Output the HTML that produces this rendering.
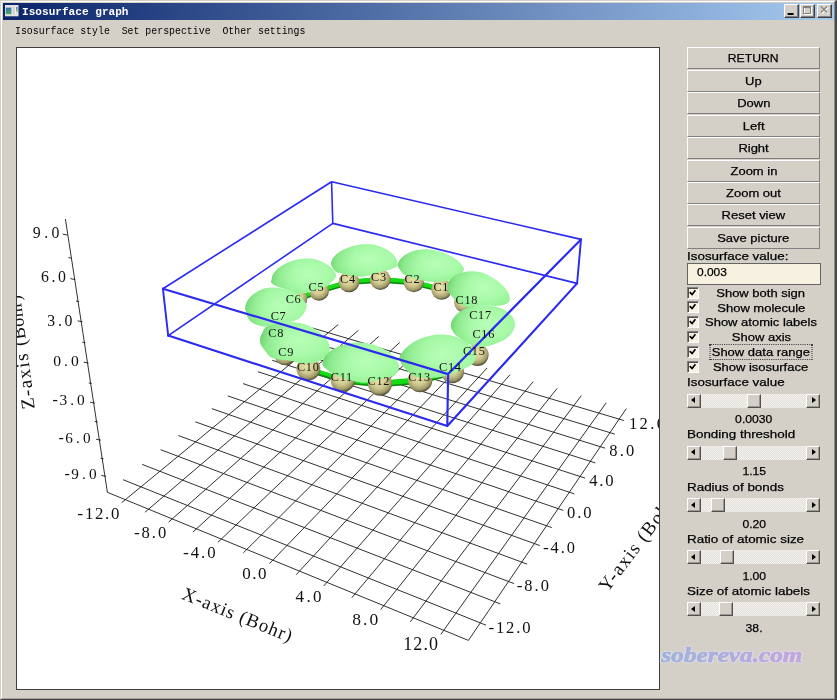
<!DOCTYPE html>
<html><head><meta charset="utf-8"><title>Isosurface graph</title>
<style>
html,body{margin:0;padding:0}
body{width:837px;height:700px;background:#d4d0c8;position:relative;overflow:hidden;font-family:"Liberation Sans",sans-serif;font-size:11.6px;color:#000}
#win{position:absolute;left:0;top:0;width:837px;height:700px;box-sizing:border-box;border-left:1px solid #d4d0c8;border-top:1px solid #d4d0c8;border-right:2px solid #484848;border-bottom:1px solid #404040}
#win2{position:absolute;left:1px;top:1px;width:834px;height:698px;border-left:1px solid #fff;border-top:1px solid #fff;border-right:1px solid #8c8a86;border-bottom:1px solid #a8a5a0;box-sizing:border-box}
#tb{position:absolute;left:3px;top:3px;width:831px;height:17px;background:linear-gradient(90deg,#0a246a 0%,#a6caf0 100%)}
#ttl{position:absolute;left:22px;top:5px;font:bold 11.1px/14px "Liberation Mono",monospace;color:#fff;white-space:pre}
#menu{position:absolute;left:15px;top:25px;font:9.9px/14px "Liberation Mono",monospace;color:#000;white-space:pre;transform:scaleY(1.14);transform-origin:0 78%}
.wb{position:absolute;top:4.3px;width:14.6px;height:13.9px;background:#d4d0c8;box-sizing:border-box;border:1px solid;border-color:#fff #404040 #404040 #fff;box-shadow:inset -1px -1px 0 #808080}
svg text{font-family:"Liberation Serif",serif;fill:#111}
.t{display:inline-block;transform:scaleX(1.12);transform-origin:50% 50%;white-space:nowrap;-webkit-text-stroke:0.25px #000}
.btn{position:absolute;left:687px;width:133px;height:22px;box-sizing:border-box;border:1px solid;border-color:#fff #808080 #808080 #fff;text-align:center;line-height:20px;background:#d4d0c8}
.lab{position:absolute;left:687px;height:14px;line-height:14px;white-space:nowrap;transform:scaleX(1.157);transform-origin:0 50%;-webkit-text-stroke:0.25px #000}
.inp{position:absolute;left:687px;top:263px;width:134px;height:22px;box-sizing:border-box;border:1px solid #646464;background:#f6f1e1;line-height:16.4px;padding-left:9.4px}
.cb{position:absolute;left:686.5px;width:12px;height:12px;box-sizing:border-box;background:#f6f1e1;border:1px solid;border-color:#808080 #fff #fff #808080;box-shadow:inset 1px 1px 0 #505050}
.cb svg{position:absolute;left:-1px;top:-1px}
.cbl{position:absolute;left:701px;width:120px;height:14px;line-height:14px;text-align:center}
.foc .t{outline:1px dotted #444;outline-offset:0px;padding:0 1px}
.sb{position:absolute;left:686.7px;width:133.8px;height:14.3px;background:#ebe9e5;background-image:conic-gradient(#f3f2ef 25%,#e3e0da 0 50%,#f3f2ef 0 75%,#e3e0da 0);background-size:2px 2px}
.ar,.th{position:absolute;top:0;width:14.3px;height:14.3px;box-sizing:border-box;background:#d4d0c8;border:1px solid;border-color:#fff #505050 #505050 #fff;box-shadow:inset -1px -1px 0 #9a9890}
.ar i{position:absolute;top:2.8px;width:0;height:0;border:3.4px solid transparent}
.ar i.l{left:0px;border-right:4px solid #000;border-left:0;left:3px}
.ar i.r{left:5px;border-left:4px solid #000;border-right:0}
.val .t{transform:scaleX(1.05)}
.val{position:absolute;left:687px;width:134px;height:14px;line-height:14px;text-align:center}
</style></head><body>
<div id="root" style="position:absolute;left:0;top:0;width:837px;height:700px;will-change:transform">
<div id="win"></div><div id="win2"></div>
<div id="tb"></div>
<svg style="position:absolute;left:5px;top:5px" width="14" height="12" viewBox="0 0 14 12"><defs><linearGradient id="ig" x1="0" y1="0" x2="0" y2="1"><stop offset="0" stop-color="#3a74b4"/><stop offset="1" stop-color="#42ac62"/></linearGradient></defs><rect x="0" y="0" width="13.5" height="11.3" fill="#e6e4de"/><rect x="0.8" y="2.6" width="5.6" height="6.6" fill="url(#ig)"/><rect x="8" y="2" width="2" height="7.5" fill="#cfcfcf"/><rect x="10" y="2" width="1.2" height="7.5" fill="#f4f4f4"/><rect x="11.3" y="2" width="1.2" height="2" fill="#3a6ab0"/><rect x="11.3" y="4" width="1.2" height="2.6" fill="#4aa860"/></svg>
<div id="ttl">Isosurface graph</div>
<div class="wb" style="left:784.3px"><svg width="12" height="11" style="position:absolute;left:0;top:0"><rect x="2.6" y="8" width="6" height="2" fill="#000"/></svg></div>
<div class="wb" style="left:800px;width:14.8px"><svg width="12" height="11" style="position:absolute;left:0;top:0"><rect x="3.5" y="2.5" width="7" height="7" fill="none" stroke="#fff"/><rect x="2.5" y="1.5" width="7" height="7" fill="none" stroke="#808080"/><rect x="2.5" y="1.5" width="7" height="1.6" fill="#808080"/></svg></div>
<div class="wb" style="left:816.8px;width:15.2px"><svg width="13" height="11" style="position:absolute;left:0;top:0"><path d="M4 2.5L10 8.5M10 2.5L4 8.5" stroke="#fff" stroke-width="1.3"/><path d="M3 1.5L9 7.5M9 1.5L3 7.5" stroke="#808080" stroke-width="1.3"/></svg></div>
<div id="menu">Isosurface style  Set perspective  Other settings</div>
<svg width="837" height="700" viewBox="0 0 837 700" style="position:absolute;left:0;top:0;will-change:transform">
<defs>
<clipPath id="cp"><rect x="17" y="48" width="642" height="641"/></clipPath>
<radialGradient id="gb" cx="0.55" cy="0.45" r="0.65"><stop offset="0" stop-color="#b8feb8"/><stop offset="0.55" stop-color="#a8faa8"/><stop offset="0.88" stop-color="#96f296"/><stop offset="1" stop-color="#82e482"/></radialGradient>
<radialGradient id="ga" cx="0.45" cy="0.38" r="0.62"><stop offset="0" stop-color="#e9e3aa"/><stop offset="0.5" stop-color="#d0c990"/><stop offset="0.82" stop-color="#a09a6a"/><stop offset="1" stop-color="#4c4830"/></radialGradient>
<linearGradient id="gs" x1="0" y1="0.35" x2="1" y2="0.5"><stop offset="0" stop-color="#4fc04f" stop-opacity="0.6"/><stop offset="0.12" stop-color="#5cc85c" stop-opacity="0.28"/><stop offset="0.35" stop-color="#6cd46c" stop-opacity="0.06"/><stop offset="0.55" stop-color="#6cd46c" stop-opacity="0"/></linearGradient>
<linearGradient id="wm" x1="0" x2="1" y1="0" y2="0"><stop offset="0" stop-color="#9db4dc"/><stop offset="1" stop-color="#c3a6dc"/></linearGradient>
</defs>
<rect x="16.5" y="47.5" width="643" height="642" fill="#fff" stroke="#404040" stroke-width="1"/>
<g clip-path="url(#cp)">
<path d="M121.7 502.7L338.3 324.5M123.1 479.7L486.1 625.2M144.9 512.3L358.4 330.4M142.2 464.4L500.4 603.9M168.6 522.1L378.8 336.4M160.6 449.7L514.1 583.6M192.9 532.1L399.7 342.5M178.3 435.5L527.2 564.1M217.8 542.4L420.9 348.7M195.3 421.8L539.8 545.5M243.3 552.9L442.5 355M211.8 408.6L551.8 527.6M269.4 563.7L464.6 361.4M227.7 395.9L563.4 510.4M296.2 574.7L487.1 368M243 383.6L574.4 493.9M323.7 586L510 374.7M257.9 371.7L585.1 478.1M351.8 597.7L533.3 381.5M272.2 360.3L595.4 462.9M380.7 609.6L557.1 388.4M286.1 349.2L605.2 448.2M410.3 621.8L581.4 395.5M299.5 338.4L614.8 434.1M440.8 634.4L606.2 402.8M312.5 328L623.9 420.5M107.4 492.3L468.4 640.4L626.3 408.6M107.4 492.3L65.4 219M67.5 235.1l-4.8 -1M71.4 258.2l-3 -0.6M75.2 279.6l-4.8 -1M78.9 301.6l-3 -0.6M82.5 321.8l-4.8 -1M85.3 342.8l-3 -0.6M88.5 363.1l-4.8 -1M91.7 383.5l-3 -0.6M94.9 403.2l-4.8 -1M97.7 422l-3 -0.6M100.9 440.2l-4.8 -1M103.5 458.8l-3 -0.6M106.1 476.4l-4.8 -1" fill="none" stroke="#1a1a1a" stroke-width="0.9"/>
<text x="32.8" y="237.8" font-size="15.8" textLength="26.7" lengthAdjust="spacing">9.0</text>
<text x="40.9" y="281.7" font-size="15.8" textLength="25" lengthAdjust="spacing">6.0</text>
<text x="47.3" y="325.6" font-size="15.8" textLength="25.2" lengthAdjust="spacing">3.0</text>
<text x="53.3" y="366.1" font-size="15.6" textLength="25.4" lengthAdjust="spacing">0.0</text>
<text x="52.6" y="405.3" font-size="16.2">-</text>
<text x="59.6" y="405.3" font-size="15.4" textLength="25.1" lengthAdjust="spacing">3.0</text>
<text x="58.4" y="443.2" font-size="16">-</text>
<text x="65.3" y="443.2" font-size="15.2" textLength="25.4" lengthAdjust="spacing">6.0</text>
<text x="64.4" y="478.8" font-size="16">-</text>
<text x="71.3" y="478.8" font-size="15.2" textLength="25.2" lengthAdjust="spacing">9.0</text>
<text x="77.3" y="518.9" font-size="17.6">-</text>
<text x="85" y="518.9" font-size="16.8" textLength="34.3" lengthAdjust="spacing">12.0</text>
<text x="134" y="538.1" font-size="17.4">-</text>
<text x="141.6" y="538.1" font-size="16.6" textLength="24.6" lengthAdjust="spacing">8.0</text>
<text x="183" y="558.4" font-size="17.6">-</text>
<text x="190.7" y="558.4" font-size="16.8" textLength="25" lengthAdjust="spacing">4.0</text>
<text x="242.2" y="579" font-size="17" textLength="24.4" lengthAdjust="spacing">0.0</text>
<text x="295.6" y="601.8" font-size="17" textLength="25.8" lengthAdjust="spacing">4.0</text>
<text x="352.2" y="624.8" font-size="17.5" textLength="26.1" lengthAdjust="spacing">8.0</text>
<text x="403.2" y="650" font-size="18" textLength="34.9" lengthAdjust="spacing">12.0</text>
<text x="629" y="428.8" font-size="16.6" textLength="36" lengthAdjust="spacing">12.0</text>
<text x="609.2" y="455.7" font-size="16.5" textLength="25.1" lengthAdjust="spacing">8.0</text>
<text x="589.3" y="485.8" font-size="16.6" textLength="24.2" lengthAdjust="spacing">4.0</text>
<text x="567" y="517.6" font-size="16.6" textLength="24.6" lengthAdjust="spacing">0.0</text>
<text x="543" y="553" font-size="17.2">-</text>
<text x="550.5" y="553" font-size="16.4" textLength="24.4" lengthAdjust="spacing">4.0</text>
<text x="516.8" y="591" font-size="17.2">-</text>
<text x="524.3" y="591" font-size="16.4" textLength="24.6" lengthAdjust="spacing">8.0</text>
<text x="488.4" y="632.6" font-size="17.4">-</text>
<text x="496" y="632.6" font-size="16.6" textLength="34.5" lengthAdjust="spacing">12.0</text>
<text transform="translate(34.8 408.5) rotate(-97.3)" font-size="19" xml:space="preserve"><tspan letter-spacing="1.5">Z-axis </tspan><tspan font-size="18.2" letter-spacing="0.5">(Bohr)</tspan></text>
<text transform="translate(180.8 598.6) rotate(21.9)" font-size="18.8" letter-spacing="1">X-axis (Bohr)</text>
<text transform="translate(607.5 593) rotate(-52.8)" font-size="19" letter-spacing="1.35">Y-axis (Bohr)</text>
<path d="M297.4 299.3L319 291.3" stroke="#0c8a0c" stroke-width="5.2"/><path d="M297.4 298.3L319 290.3" stroke="#14dc14" stroke-width="4"/>
<path d="M319 291.3L349 282.5" stroke="#0c8a0c" stroke-width="5.2"/><path d="M319 290.3L349 281.5" stroke="#14dc14" stroke-width="4"/>
<path d="M349 282.5L380.3 280.1" stroke="#0c8a0c" stroke-width="5.2"/><path d="M349 281.5L380.3 279.1" stroke="#14dc14" stroke-width="4"/>
<path d="M380.3 280.1L413.8 282.7" stroke="#0c8a0c" stroke-width="5.2"/><path d="M380.3 279.1L413.8 281.7" stroke="#14dc14" stroke-width="4"/>
<path d="M413.8 282.7L441.6 290" stroke="#0c8a0c" stroke-width="5.2"/><path d="M413.8 281.7L441.6 289" stroke="#14dc14" stroke-width="4"/>
<circle cx="297.4" cy="298.7" r="9.9" fill="url(#ga)"/>
<circle cx="319" cy="290.7" r="10" fill="url(#ga)"/>
<circle cx="349" cy="281.9" r="10.4" fill="url(#ga)"/>
<circle cx="380.3" cy="279.5" r="10.4" fill="url(#ga)"/>
<circle cx="413.8" cy="282.1" r="10.2" fill="url(#ga)"/>
<circle cx="441.6" cy="289.4" r="10.4" fill="url(#ga)"/>
<circle cx="464.5" cy="302.5" r="10.4" fill="url(#ga)"/>
<path d="M331.2 262.3C331.6 261 332.2 259 333.7 257.2C335.1 255.4 337.4 253.2 340.1 251.5C342.9 249.8 346.8 248.1 350.1 246.9C353.5 245.8 356.8 245.1 360.2 244.6C363.5 244.2 366.9 244 370.2 244.3C373.6 244.6 377.1 245.4 380.3 246.5C383.4 247.6 386.3 249 388.9 250.8C391.4 252.6 393.9 255.1 395.3 257.2C396.7 259.4 397.3 262.1 397.5 263.7C397.7 265.2 397.6 265.6 396.5 266.5C395.4 267.4 393.1 268.4 391 269.2C388.9 269.9 386.3 270.3 383.7 271C381.1 271.7 377.8 272.7 375.1 273.5C372.4 274.3 370 275.5 367.3 276C364.6 276.5 361.7 276.7 358.7 276.6C355.7 276.5 352.1 275.8 349.3 275.3C346.6 274.8 344.4 274.1 342.2 273.5C340 272.9 337.9 272.8 336.4 272C334.9 271.2 334.1 269.7 333.2 268.5C332.3 267.3 331.5 265.8 331.2 264.8C330.9 263.8 330.8 263.5 331.2 262.3Z" fill="url(#gb)"/><path d="M331.2 262.3C331.6 261 332.2 259 333.7 257.2C335.1 255.4 337.4 253.2 340.1 251.5C342.9 249.8 346.8 248.1 350.1 246.9C353.5 245.8 356.8 245.1 360.2 244.6C363.5 244.2 366.9 244 370.2 244.3C373.6 244.6 377.1 245.4 380.3 246.5C383.4 247.6 386.3 249 388.9 250.8C391.4 252.6 393.9 255.1 395.3 257.2C396.7 259.4 397.3 262.1 397.5 263.7C397.7 265.2 397.6 265.6 396.5 266.5C395.4 267.4 393.1 268.4 391 269.2C388.9 269.9 386.3 270.3 383.7 271C381.1 271.7 377.8 272.7 375.1 273.5C372.4 274.3 370 275.5 367.3 276C364.6 276.5 361.7 276.7 358.7 276.6C355.7 276.5 352.1 275.8 349.3 275.3C346.6 274.8 344.4 274.1 342.2 273.5C340 272.9 337.9 272.8 336.4 272C334.9 271.2 334.1 269.7 333.2 268.5C332.3 267.3 331.5 265.8 331.2 264.8C330.9 263.8 330.8 263.5 331.2 262.3Z" fill="url(#gs)"/>
<path d="M397.9 263.7C398.4 262.5 399.2 260.3 400.8 258.7C402.3 257 404.5 255.1 407.2 253.7C410 252.2 413.7 250.8 417.2 250.1C420.8 249.4 424.9 249.1 428.7 249.4C432.5 249.6 436.6 250.4 440.2 251.5C443.8 252.6 447.1 254.1 450.2 255.8C453.3 257.5 456.6 259.6 458.8 261.5C461 263.5 462.6 265.8 463.4 267.3C464.2 268.8 464.1 269.3 463.6 270.5C463.1 271.7 461.9 273.3 460.2 274.7C458.5 276.1 455.4 277.9 453.5 278.9C451.6 279.8 450.4 279.9 448.5 280.4C446.6 280.8 444.4 281.3 441.8 281.6C439.2 281.9 435.8 282.3 432.6 282.1C429.4 281.9 426.1 281.2 422.6 280.4C419.1 279.6 414.8 278.4 411.7 277.4C408.6 276.4 406.1 275.9 404.2 274.6C402.2 273.3 401.1 271.1 400 269.7C398.9 268.3 398.3 267 397.9 266C397.5 265 397.4 264.9 397.9 263.7Z" fill="url(#gb)"/><path d="M397.9 263.7C398.4 262.5 399.2 260.3 400.8 258.7C402.3 257 404.5 255.1 407.2 253.7C410 252.2 413.7 250.8 417.2 250.1C420.8 249.4 424.9 249.1 428.7 249.4C432.5 249.6 436.6 250.4 440.2 251.5C443.8 252.6 447.1 254.1 450.2 255.8C453.3 257.5 456.6 259.6 458.8 261.5C461 263.5 462.6 265.8 463.4 267.3C464.2 268.8 464.1 269.3 463.6 270.5C463.1 271.7 461.9 273.3 460.2 274.7C458.5 276.1 455.4 277.9 453.5 278.9C451.6 279.8 450.4 279.9 448.5 280.4C446.6 280.8 444.4 281.3 441.8 281.6C439.2 281.9 435.8 282.3 432.6 282.1C429.4 281.9 426.1 281.2 422.6 280.4C419.1 279.6 414.8 278.4 411.7 277.4C408.6 276.4 406.1 275.9 404.2 274.6C402.2 273.3 401.1 271.1 400 269.7C398.9 268.3 398.3 267 397.9 266C397.5 265 397.4 264.9 397.9 263.7Z" fill="url(#gs)"/>
<path d="M271.6 280.2C271.8 278.8 271.8 276.5 273 274.4C274.2 272.4 276.4 270 278.7 268C281.1 266 284.2 264.1 287.3 262.7C290.5 261.3 294 260.1 297.4 259.4C300.7 258.7 304.3 258.4 307.4 258.4C310.5 258.4 313.2 258.6 316 259.4C318.9 260.2 322 261.5 324.6 263C327.3 264.4 330 266.3 331.8 268C333.6 269.7 334.7 271.5 335.4 273C336 274.6 336.9 275.4 335.8 277.3C334.7 279.2 331 282.8 328.9 284.5C326.9 286.2 325.7 286.7 323.5 287.6C321.3 288.5 318.4 289.3 316 290.1C313.6 290.9 311.2 292.1 309.3 292.6C307.4 293.1 306.4 293.1 304.3 293.2C302.2 293.3 299.5 294 296.7 293.4C293.9 292.8 290.5 290.6 287.3 289.5C284.1 288.4 279.9 287.7 277.3 286.6C274.7 285.5 272.6 284.1 271.6 283C270.6 281.9 271.3 281.6 271.6 280.2Z" fill="url(#gb)"/><path d="M271.6 280.2C271.8 278.8 271.8 276.5 273 274.4C274.2 272.4 276.4 270 278.7 268C281.1 266 284.2 264.1 287.3 262.7C290.5 261.3 294 260.1 297.4 259.4C300.7 258.7 304.3 258.4 307.4 258.4C310.5 258.4 313.2 258.6 316 259.4C318.9 260.2 322 261.5 324.6 263C327.3 264.4 330 266.3 331.8 268C333.6 269.7 334.7 271.5 335.4 273C336 274.6 336.9 275.4 335.8 277.3C334.7 279.2 331 282.8 328.9 284.5C326.9 286.2 325.7 286.7 323.5 287.6C321.3 288.5 318.4 289.3 316 290.1C313.6 290.9 311.2 292.1 309.3 292.6C307.4 293.1 306.4 293.1 304.3 293.2C302.2 293.3 299.5 294 296.7 293.4C293.9 292.8 290.5 290.6 287.3 289.5C284.1 288.4 279.9 287.7 277.3 286.6C274.7 285.5 272.6 284.1 271.6 283C270.6 281.9 271.3 281.6 271.6 280.2Z" fill="url(#gs)"/>
<path d="M447.3 287.3C447.5 285.8 447.6 283.5 448.8 281.6C450 279.7 452.1 277.4 454.5 275.9C456.9 274.3 460 273.1 463.1 272.3C466.2 271.5 469.8 271.2 473.2 271.3C476.5 271.4 479.8 271.9 483.2 273C486.5 274.1 490.1 276.1 493.2 278C496.3 279.9 499.4 282.2 501.8 284.5C504.2 286.8 506.2 289.5 507.6 291.6C508.9 293.8 509.5 295.7 509.7 297.4C510 299.1 509.8 300.5 509 301.7C508.2 302.9 506.8 303.8 504.7 304.6C502.5 305.3 499.4 305.9 496.1 306C492.7 306.1 488 305.3 484.6 305.3C481.3 305.3 478.9 305.6 476 306C473.2 306.3 470.5 308.1 467.4 307.4C464.3 306.7 460 303.6 457.4 301.7C454.8 299.8 453.2 297.7 451.6 295.9C450.1 294.2 448.8 292.4 448.1 290.9C447.3 289.5 447.2 288.9 447.3 287.3Z" fill="url(#gb)"/><path d="M447.3 287.3C447.5 285.8 447.6 283.5 448.8 281.6C450 279.7 452.1 277.4 454.5 275.9C456.9 274.3 460 273.1 463.1 272.3C466.2 271.5 469.8 271.2 473.2 271.3C476.5 271.4 479.8 271.9 483.2 273C486.5 274.1 490.1 276.1 493.2 278C496.3 279.9 499.4 282.2 501.8 284.5C504.2 286.8 506.2 289.5 507.6 291.6C508.9 293.8 509.5 295.7 509.7 297.4C510 299.1 509.8 300.5 509 301.7C508.2 302.9 506.8 303.8 504.7 304.6C502.5 305.3 499.4 305.9 496.1 306C492.7 306.1 488 305.3 484.6 305.3C481.3 305.3 478.9 305.6 476 306C473.2 306.3 470.5 308.1 467.4 307.4C464.3 306.7 460 303.6 457.4 301.7C454.8 299.8 453.2 297.7 451.6 295.9C450.1 294.2 448.8 292.4 448.1 290.9C447.3 289.5 447.2 288.9 447.3 287.3Z" fill="url(#gs)"/>
<path d="M245.3 308.7C245 306.1 245.7 304.9 246.5 303C247.3 301.1 248.4 299 250.1 297.2C251.7 295.4 254.1 293.7 256.5 292.2C258.9 290.8 261.7 289.4 264.4 288.6C267.2 287.8 270.1 287.5 273 287.5C275.9 287.5 278.7 288.1 281.6 288.5C284.5 288.9 288.3 289.5 290.2 289.9C292.1 290.3 292 290.4 293.1 290.9C294.2 291.5 295.2 292.1 296.7 293.4C298.1 294.6 300.4 296.9 302 298.5C303.5 300.2 305.2 301.9 306 303.3C306.8 304.6 306.6 305.4 306.6 306.6C306.5 307.7 306.3 308.8 305.7 310.1C305.1 311.5 304.5 312.9 303.1 314.4C301.7 316 299.5 318.2 297.4 319.5C295.2 320.7 292.6 321.3 290.2 321.9C287.8 322.5 285.9 322.5 283 323C280.2 323.6 276.1 324.6 273 325.2C269.9 325.8 267.5 326.9 264.4 326.6C261.3 326.4 257 325.1 254.4 323.8C251.7 322.4 250.1 321.3 248.6 318.7C247.1 316.2 245.7 311.3 245.3 308.7Z" fill="url(#gb)"/><path d="M245.3 308.7C245 306.1 245.7 304.9 246.5 303C247.3 301.1 248.4 299 250.1 297.2C251.7 295.4 254.1 293.7 256.5 292.2C258.9 290.8 261.7 289.4 264.4 288.6C267.2 287.8 270.1 287.5 273 287.5C275.9 287.5 278.7 288.1 281.6 288.5C284.5 288.9 288.3 289.5 290.2 289.9C292.1 290.3 292 290.4 293.1 290.9C294.2 291.5 295.2 292.1 296.7 293.4C298.1 294.6 300.4 296.9 302 298.5C303.5 300.2 305.2 301.9 306 303.3C306.8 304.6 306.6 305.4 306.6 306.6C306.5 307.7 306.3 308.8 305.7 310.1C305.1 311.5 304.5 312.9 303.1 314.4C301.7 316 299.5 318.2 297.4 319.5C295.2 320.7 292.6 321.3 290.2 321.9C287.8 322.5 285.9 322.5 283 323C280.2 323.6 276.1 324.6 273 325.2C269.9 325.8 267.5 326.9 264.4 326.6C261.3 326.4 257 325.1 254.4 323.8C251.7 322.4 250.1 321.3 248.6 318.7C247.1 316.2 245.7 311.3 245.3 308.7Z" fill="url(#gs)"/>
<path d="M452.4 372.2L477.5 355.4" stroke="#0c8a0c" stroke-width="5.6"/><path d="M452.4 371.2L477.5 354.4" stroke="#14dc14" stroke-width="4.4"/>
<circle cx="273.6" cy="335" r="9.9" fill="url(#ga)"/>
<circle cx="285.2" cy="354.3" r="10.9" fill="url(#ga)"/>
<circle cx="477.5" cy="354.8" r="11.1" fill="url(#ga)"/>
<path d="M308.4 369.3L342.8 380.5" stroke="#0c8a0c" stroke-width="5"/><path d="M308.4 368.3L342.8 379.5" stroke="#14dc14" stroke-width="3.8"/>
<circle cx="308.4" cy="368.7" r="11.9" fill="url(#ga)"/>
<path d="M265.8 327.3C267.9 325.9 271.6 325.2 274.4 324.5C277.3 323.8 279.7 323.4 283 323C286.4 322.7 290.5 322 294.5 322.3C298.6 322.7 303.4 323.6 307.4 325.2C311.5 326.8 315.8 329.4 318.9 331.6C322 333.9 324.3 336.4 326.1 338.8C327.8 341.2 329.2 343.7 329.6 346C330.1 348.3 330.1 350.2 328.9 352.4C327.7 354.6 325.1 357.4 322.5 359.2C319.8 360.9 316.6 362.4 313.2 363C309.7 363.7 305.3 363.7 301.7 363.3C298.1 363 296.4 361.8 291.6 360.9C286.9 360 277.3 359.7 273 358.2C268.7 356.6 267.9 354 265.8 351.7C263.8 349.5 261.8 346.7 260.8 344.6C259.9 342.4 259.9 340.7 260.1 338.8C260.3 336.9 261.3 335 262.3 333.1C263.2 331.2 263.8 328.8 265.8 327.3Z" fill="url(#gb)"/><path d="M265.8 327.3C267.9 325.9 271.6 325.2 274.4 324.5C277.3 323.8 279.7 323.4 283 323C286.4 322.7 290.5 322 294.5 322.3C298.6 322.7 303.4 323.6 307.4 325.2C311.5 326.8 315.8 329.4 318.9 331.6C322 333.9 324.3 336.4 326.1 338.8C327.8 341.2 329.2 343.7 329.6 346C330.1 348.3 330.1 350.2 328.9 352.4C327.7 354.6 325.1 357.4 322.5 359.2C319.8 360.9 316.6 362.4 313.2 363C309.7 363.7 305.3 363.7 301.7 363.3C298.1 363 296.4 361.8 291.6 360.9C286.9 360 277.3 359.7 273 358.2C268.7 356.6 267.9 354 265.8 351.7C263.8 349.5 261.8 346.7 260.8 344.6C259.9 342.4 259.9 340.7 260.1 338.8C260.3 336.9 261.3 335 262.3 333.1C263.2 331.2 263.8 328.8 265.8 327.3Z" fill="url(#gs)"/>
<path d="M450.8 325.9C450.8 324.2 451.2 322.2 452.3 320.1C453.3 318.1 455 315.6 457.3 313.7C459.5 311.8 462.5 310 465.9 308.7C469.2 307.4 473.5 306.3 477.3 305.8C481.2 305.3 485 305.2 488.8 305.5C492.6 305.9 496.9 306.7 500.3 308C503.6 309.2 506.6 311.1 508.9 313C511.2 314.9 512.9 317.3 513.9 319.4C514.9 321.6 515.3 323.6 514.9 325.9C514.6 328.1 513.2 330.9 511.8 333C510.3 335.2 508.4 337.1 506 338.8C503.6 340.5 500.3 341.9 497.4 343.1C494.6 344.3 491.7 345.4 488.8 345.9C485.9 346.5 483.3 346.9 480.2 346.7C477.1 346.4 473 345.6 470.2 344.5C467.3 343.4 465.4 341.8 463 340.2C460.6 338.7 457.6 336.9 455.8 335.2C454.1 333.5 453.1 331.7 452.3 330.2C451.4 328.6 450.8 327.6 450.8 325.9Z" fill="url(#gb)"/><path d="M450.8 325.9C450.8 324.2 451.2 322.2 452.3 320.1C453.3 318.1 455 315.6 457.3 313.7C459.5 311.8 462.5 310 465.9 308.7C469.2 307.4 473.5 306.3 477.3 305.8C481.2 305.3 485 305.2 488.8 305.5C492.6 305.9 496.9 306.7 500.3 308C503.6 309.2 506.6 311.1 508.9 313C511.2 314.9 512.9 317.3 513.9 319.4C514.9 321.6 515.3 323.6 514.9 325.9C514.6 328.1 513.2 330.9 511.8 333C510.3 335.2 508.4 337.1 506 338.8C503.6 340.5 500.3 341.9 497.4 343.1C494.6 344.3 491.7 345.4 488.8 345.9C485.9 346.5 483.3 346.9 480.2 346.7C477.1 346.4 473 345.6 470.2 344.5C467.3 343.4 465.4 341.8 463 340.2C460.6 338.7 457.6 336.9 455.8 335.2C454.1 333.5 453.1 331.7 452.3 330.2C451.4 328.6 450.8 327.6 450.8 325.9Z" fill="url(#gs)"/>
<path d="M342.8 380.5L380 384.2" stroke="#0c8a0c" stroke-width="6.2"/><path d="M342.8 379.5L380 383.2" stroke="#14dc14" stroke-width="5"/>
<path d="M380 384.2L420.2 380.8" stroke="#0c8a0c" stroke-width="6.2"/><path d="M380 383.2L420.2 379.8" stroke="#14dc14" stroke-width="5"/>
<path d="M420.2 380.8L452.4 372.2" stroke="#0c8a0c" stroke-width="6.2"/><path d="M420.2 379.8L452.4 371.2" stroke="#14dc14" stroke-width="5"/>
<circle cx="342.8" cy="379.9" r="12.1" fill="url(#ga)"/>
<circle cx="380" cy="383.6" r="12.1" fill="url(#ga)"/>
<circle cx="420.2" cy="380.2" r="12.1" fill="url(#ga)"/>
<circle cx="452.4" cy="371.6" r="11.6" fill="url(#ga)"/>
<path d="M322.7 363C322.9 361.7 323 359.3 324.4 357.3C325.8 355.2 328.2 352.7 330.9 350.8C333.5 348.9 336.7 347.1 340.2 345.8C343.6 344.5 347.8 343.5 351.6 342.9C355.5 342.4 359.3 342.3 363.1 342.7C366.9 343 371 344 374.6 345.1C378.2 346.2 381.5 347.6 384.6 349.4C387.7 351.2 391 353.6 393.2 355.8C395.5 358.1 397.3 360.9 398.2 363C399.2 365.2 399.3 367 399 368.7C398.6 370.5 397.5 372.4 396.1 373.8C394.7 375.1 393.7 376 390.4 377.1C387 378.1 380.3 379.3 376 380.2C371.7 381.2 367.9 382.6 364.6 382.8C361.2 383 359.3 382.3 355.9 381.6C352.6 381 348.5 380.2 344.5 378.8C340.4 377.3 334.8 374.8 331.6 373C328.4 371.3 326.6 369.3 325.1 368C323.7 366.7 323.4 366 323 365.2C322.6 364.3 322.4 364.3 322.7 363Z" fill="url(#gb)"/><path d="M322.7 363C322.9 361.7 323 359.3 324.4 357.3C325.8 355.2 328.2 352.7 330.9 350.8C333.5 348.9 336.7 347.1 340.2 345.8C343.6 344.5 347.8 343.5 351.6 342.9C355.5 342.4 359.3 342.3 363.1 342.7C366.9 343 371 344 374.6 345.1C378.2 346.2 381.5 347.6 384.6 349.4C387.7 351.2 391 353.6 393.2 355.8C395.5 358.1 397.3 360.9 398.2 363C399.2 365.2 399.3 367 399 368.7C398.6 370.5 397.5 372.4 396.1 373.8C394.7 375.1 393.7 376 390.4 377.1C387 378.1 380.3 379.3 376 380.2C371.7 381.2 367.9 382.6 364.6 382.8C361.2 383 359.3 382.3 355.9 381.6C352.6 381 348.5 380.2 344.5 378.8C340.4 377.3 334.8 374.8 331.6 373C328.4 371.3 326.6 369.3 325.1 368C323.7 366.7 323.4 366 323 365.2C322.6 364.3 322.4 364.3 322.7 363Z" fill="url(#gs)"/>
<path d="M399.4 358C399.7 356.6 400.6 354.4 402.3 352.3C403.9 350.1 406.7 347.2 409.4 345.1C412.2 342.9 415.3 340.9 418.7 339.4C422.2 337.8 426.4 336.6 430.2 335.8C434 335 437.9 334.6 441.7 334.6C445.5 334.7 449.5 335 453.2 336.1C456.9 337.1 460.9 339 463.9 340.8C466.9 342.6 469.2 344.4 471.1 346.7C473 348.9 474.7 352.2 475.4 354.4C476.1 356.7 476.2 358.3 475.4 360.1C474.5 362 473.1 363.8 470.4 365.6C467.6 367.4 462.7 369.4 458.9 371C455.1 372.7 450.8 374.3 447.4 375.3C444.1 376.4 441.4 376.9 438.8 377.3C436.2 377.8 434.3 377.9 431.6 377.9C429 378 425.9 378 423 377.6C420.2 377.3 417 377 414.4 375.9C411.9 374.9 409.5 373 407.6 371.3C405.6 369.6 403.9 367.3 402.7 365.6C401.4 363.8 400.7 362.1 400.1 360.9C399.6 359.6 399 359.4 399.4 358Z" fill="url(#gb)"/><path d="M399.4 358C399.7 356.6 400.6 354.4 402.3 352.3C403.9 350.1 406.7 347.2 409.4 345.1C412.2 342.9 415.3 340.9 418.7 339.4C422.2 337.8 426.4 336.6 430.2 335.8C434 335 437.9 334.6 441.7 334.6C445.5 334.7 449.5 335 453.2 336.1C456.9 337.1 460.9 339 463.9 340.8C466.9 342.6 469.2 344.4 471.1 346.7C473 348.9 474.7 352.2 475.4 354.4C476.1 356.7 476.2 358.3 475.4 360.1C474.5 362 473.1 363.8 470.4 365.6C467.6 367.4 462.7 369.4 458.9 371C455.1 372.7 450.8 374.3 447.4 375.3C444.1 376.4 441.4 376.9 438.8 377.3C436.2 377.8 434.3 377.9 431.6 377.9C429 378 425.9 378 423 377.6C420.2 377.3 417 377 414.4 375.9C411.9 374.9 409.5 373 407.6 371.3C405.6 369.6 403.9 367.3 402.7 365.6C401.4 363.8 400.7 362.1 400.1 360.9C399.6 359.6 399 359.4 399.4 358Z" fill="url(#gs)"/>
<path d="M162.9 288.7L331.6 181.8M331.6 181.8L581 239.4M331.6 181.8L332.8 223.4M168.2 335.6L332.8 223.4M332.8 223.4L577.1 283.4" fill="none" stroke="#2a2af0" stroke-width="1.6" stroke-linecap="round"/>
<path d="M162.9 288.7L168.2 335.6M581 239.4L577.1 283.4" fill="none" stroke="#2a2af0" stroke-width="1.9" stroke-linecap="round"/>
<path d="M162.9 288.7L448.1 374.1M448.1 374.1L581 239.4M448.1 374.1L447.3 426M168.2 335.6L447.3 426M447.3 426L577.1 283.4" fill="none" stroke="#2a2af0" stroke-width="2.15" stroke-linecap="round"/>
<text x="316.5" y="291.1" font-size="12.3" letter-spacing="0.7" text-anchor="middle">C5</text>
<text x="293.6" y="302.9" font-size="12.3" letter-spacing="0.7" text-anchor="middle">C6</text>
<text x="278.6" y="320.1" font-size="12.3" letter-spacing="0.7" text-anchor="middle">C7</text>
<text x="276.2" y="337.3" font-size="12.3" letter-spacing="0.7" text-anchor="middle">C8</text>
<text x="286.2" y="356.1" font-size="12.3" letter-spacing="0.7" text-anchor="middle">C9</text>
<text x="308.2" y="371.1" font-size="12.3" letter-spacing="0.7" text-anchor="middle">C10</text>
<text x="341.9" y="381.4" font-size="12.3" letter-spacing="0.7" text-anchor="middle">C11</text>
<text x="378.9" y="385.2" font-size="12.3" letter-spacing="0.7" text-anchor="middle">C12</text>
<text x="419.5" y="381.3" font-size="12.3" letter-spacing="0.7" text-anchor="middle">C13</text>
<text x="450.3" y="370.8" font-size="12.3" letter-spacing="0.7" text-anchor="middle">C14</text>
<text x="474.2" y="355.2" font-size="12.3" letter-spacing="0.7" text-anchor="middle">C15</text>
<text x="483.7" y="338" font-size="12.3" letter-spacing="0.7" text-anchor="middle">C16</text>
<text x="480.5" y="319.4" font-size="12.3" letter-spacing="0.7" text-anchor="middle">C17</text>
<text x="466.9" y="303.6" font-size="12.3" letter-spacing="0.7" text-anchor="middle">C18</text>
<text x="441.3" y="290.7" font-size="12.3" letter-spacing="0.7" text-anchor="middle">C1</text>
<text x="412.5" y="283.1" font-size="12.3" letter-spacing="0.7" text-anchor="middle">C2</text>
<text x="379" y="280.7" font-size="12.3" letter-spacing="0.7" text-anchor="middle">C3</text>
<text x="348" y="283" font-size="12.3" letter-spacing="0.7" text-anchor="middle">C4</text>
</g>
<text x="661.5" y="661.5" font-family="'Liberation Serif',serif" font-weight="bold" font-style="italic" font-size="20.5" textLength="141" lengthAdjust="spacingAndGlyphs" style="fill:url(#wm)" stroke="#dcd9e2" stroke-width="2.6" stroke-linejoin="round" paint-order="stroke">sobereva.com</text>
<text x="661.5" y="661.5" font-family="'Liberation Serif',serif" font-weight="bold" font-style="italic" font-size="20.5" textLength="141" lengthAdjust="spacingAndGlyphs" style="fill:url(#wm)" stroke="url(#wm)" stroke-width="0.5">sobereva.com</text>
</svg>
<div class="btn" style="top:47px"><span class="t" style="transform:scaleX(1.05)">RETURN</span></div>
<div class="btn" style="top:70px"><span class="t">Up</span></div>
<div class="btn" style="top:92px"><span class="t">Down</span></div>
<div class="btn" style="top:115px"><span class="t">Left</span></div>
<div class="btn" style="top:137px"><span class="t">Right</span></div>
<div class="btn" style="top:160px"><span class="t">Zoom in</span></div>
<div class="btn" style="top:182px"><span class="t">Zoom out</span></div>
<div class="btn" style="top:204px"><span class="t">Reset view</span></div>
<div class="btn" style="top:227px"><span class="t">Save picture</span></div>
<div class="lab" style="top:248.6px">Isosurface value:</div>
<div class="inp"><span class="t" style="transform-origin:0 50%;transform:scaleX(1.03)">0.003</span></div>
<div class="cb" style="top:286.9px"><svg width="12" height="12" viewBox="0 0 12 12"><path d="M2.7 5.1L5.1 7.5L8.4 3.3" fill="none" stroke="#000" stroke-width="1.7"/></svg></div>
<div class="cbl" style="top:286px"><span class="t">Show both sign</span></div>
<div class="cb" style="top:301.4px"><svg width="12" height="12" viewBox="0 0 12 12"><path d="M2.7 5.1L5.1 7.5L8.4 3.3" fill="none" stroke="#000" stroke-width="1.7"/></svg></div>
<div class="cbl" style="top:300.5px"><span class="t">Show molecule</span></div>
<div class="cb" style="top:315.9px"><svg width="12" height="12" viewBox="0 0 12 12"><path d="M2.7 5.1L5.1 7.5L8.4 3.3" fill="none" stroke="#000" stroke-width="1.7"/></svg></div>
<div class="cbl" style="top:315px"><span class="t">Show atomic labels</span></div>
<div class="cb" style="top:330.9px"><svg width="12" height="12" viewBox="0 0 12 12"><path d="M2.7 5.1L5.1 7.5L8.4 3.3" fill="none" stroke="#000" stroke-width="1.7"/></svg></div>
<div class="cbl" style="top:330px"><span class="t">Show axis</span></div>
<div class="cb" style="top:345.9px"><svg width="12" height="12" viewBox="0 0 12 12"><path d="M2.7 5.1L5.1 7.5L8.4 3.3" fill="none" stroke="#000" stroke-width="1.7"/></svg></div>
<div class="cbl foc" style="top:345px"><span class="t">Show data range</span></div>
<div class="cb" style="top:360.9px"><svg width="12" height="12" viewBox="0 0 12 12"><path d="M2.7 5.1L5.1 7.5L8.4 3.3" fill="none" stroke="#000" stroke-width="1.7"/></svg></div>
<div class="cbl" style="top:360px"><span class="t">Show isosurface</span></div>
<div class="lab" style="top:375.3px">Isosurface value</div>
<div class="sb" style="top:393.5px"><div class="ar" style="left:0"><i class="l"></i></div><div class="ar" style="right:0"><i class="r"></i></div><div class="th" style="left:60px"></div></div>
<div class="val" style="top:412.3px"><span class="t">0.0030</span></div>
<div class="lab" style="top:427.4px">Bonding threshold</div>
<div class="sb" style="top:445.6px"><div class="ar" style="left:0"><i class="l"></i></div><div class="ar" style="right:0"><i class="r"></i></div><div class="th" style="left:36px"></div></div>
<div class="val" style="top:464.4px"><span class="t">1.15</span></div>
<div class="lab" style="top:479.6px">Radius of bonds</div>
<div class="sb" style="top:497.8px"><div class="ar" style="left:0"><i class="l"></i></div><div class="ar" style="right:0"><i class="r"></i></div><div class="th" style="left:24px"></div></div>
<div class="val" style="top:516.6px"><span class="t">0.20</span></div>
<div class="lab" style="top:531.8px">Ratio of atomic size</div>
<div class="sb" style="top:550px"><div class="ar" style="left:0"><i class="l"></i></div><div class="ar" style="right:0"><i class="r"></i></div><div class="th" style="left:33px"></div></div>
<div class="val" style="top:568.8px"><span class="t">1.00</span></div>
<div class="lab" style="top:583.9px">Size of atomic labels</div>
<div class="sb" style="top:602.1px"><div class="ar" style="left:0"><i class="l"></i></div><div class="ar" style="right:0"><i class="r"></i></div><div class="th" style="left:32px"></div></div>
<div class="val" style="top:620.9px"><span class="t">38.</span></div>
</div>
</body></html>
